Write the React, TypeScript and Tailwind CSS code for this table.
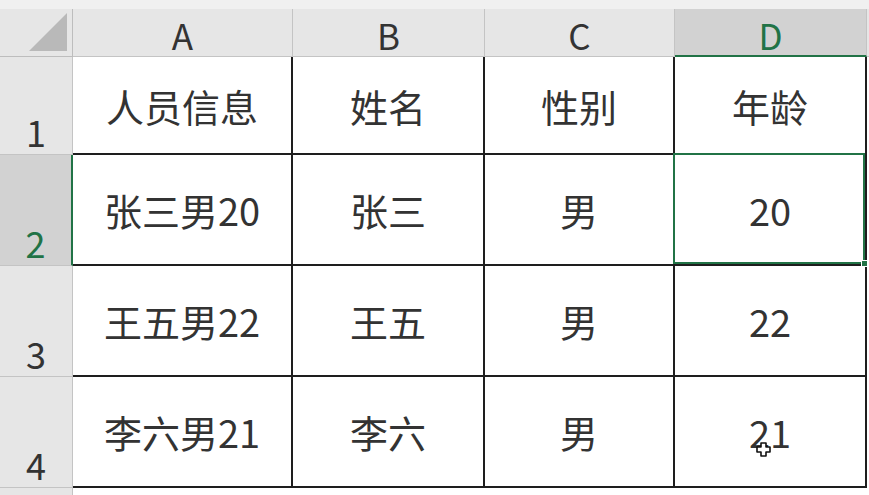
import React from "react";

const cols = [
  { key: "A", w: "w-[220px]" },
  { key: "B", w: "w-[192px]" },
  { key: "C", w: "w-[190px]" },
  { key: "D", w: "w-[192px]" },
];

const rows = [
  { n: 1, h: "h-[98px]", cells: ["人员信息", "姓名", "性别", "年龄"] },
  { n: 2, h: "h-[111px]", cells: ["张三男20", "张三", "男", "20"] },
  { n: 3, h: "h-[111px]", cells: ["王五男22", "王五", "男", "22"] },
  { n: 4, h: "h-[111px]", cells: ["李六男21", "李六", "男", "21"] },
];

function CornerTriangle() {
  return (
    <svg width="42" height="40" viewBox="0 0 42 40" className="absolute right-[3px] bottom-[3px]">
      <polygon points="40,0 40,38 2,38" fill="#b9b9b9" />
    </svg>
  );
}

function CrossCursor() {
  return (
    <svg width="15" height="15" viewBox="0 0 15 15" className="absolute left-[81px] top-[65px]">
      <path
        d="M5 1h5v4h4v5h-4v4H5v-4H1V5h4z"
        fill="#fff"
        stroke="#111"
        strokeWidth="1.6"
        strokeLinejoin="round"
      />
    </svg>
  );
}

export default function App() {
  const selCol = "D";
  const selRow = 2;

  return (
    <div className="w-[869px] h-[495px] overflow-hidden bg-white font-['Noto_Sans_CJK_SC','Noto_Sans',sans-serif] text-[#333333]">
      <div className="h-[9px] bg-[#f0f0f0]" />

      {/* column headers */}
      <div className="flex h-[48px] bg-[#e6e6e6]">
        <div className="relative w-[73px] shrink-0 border-r border-b border-[#bdbdbd]">
          <CornerTriangle />
        </div>
        {cols.map((c) => {
          const sel = c.key === selCol;
          return (
            <div
              key={c.key}
              className={
                sel
                  ? `${c.w} shrink-0 flex items-center justify-center pt-[4px] bg-[#d2d2d2] text-[#217346] border-r border-[#c4c4c4] border-b-2 border-b-[#217346] text-[35px] leading-none`
                  : `${c.w} shrink-0 flex items-center justify-center pt-[4px] border-r border-b border-[#c4c4c4] text-[35px] leading-none`
              }
            >
              {c.key}
            </div>
          );
        })}
        <div className="flex-1 border-b border-[#c4c4c4]" />
      </div>

      {/* body */}
      {rows.map((r) => {
        const rowSel = r.n === selRow;
        return (
          <div key={r.n} className={`flex ${r.h}`}>
            <div
              className={
                rowSel
                  ? "w-[73px] shrink-0 flex items-end justify-center pb-[5px] bg-[#d2d2d2] text-[#217346] border-r-2 border-r-[#217346] border-b border-b-[#c4c4c4] text-[36px] leading-none"
                  : "w-[73px] shrink-0 flex items-end justify-center pb-[5px] bg-[#e6e6e6] border-r border-b border-[#c4c4c4] text-[36px] leading-none"
              }
            >
              {r.n}
            </div>
            {cols.map((c, i) => {
              const active = rowSel && c.key === selCol;
              return (
                <div
                  key={c.key}
                  className={`relative ${c.w} shrink-0 flex items-center justify-center pt-[1px] border-r-2 border-b-2 border-[#1e1e1e] text-[38px] leading-none`}
                >
                  {r.cells[i]}
                  {active && (
                    <div className="absolute -left-[2px] -top-[2px] right-0 bottom-0 z-10 border-2 border-[#217346]">
                      <div className="absolute -right-[5px] -bottom-[5px] w-[7px] h-[7px] bg-[#217346] border border-white" />
                    </div>
                  )}
                  {r.n === 4 && c.key === "D" && <CrossCursor />}
                </div>
              );
            })}
            <div className="flex-1" />
          </div>
        );
      })}

      <div className="flex h-[10px]">
        <div className="w-[73px] shrink-0 bg-[#e6e6e6] border-r border-[#c4c4c4]" />
        <div className="flex-1" />
      </div>
    </div>
  );
}
